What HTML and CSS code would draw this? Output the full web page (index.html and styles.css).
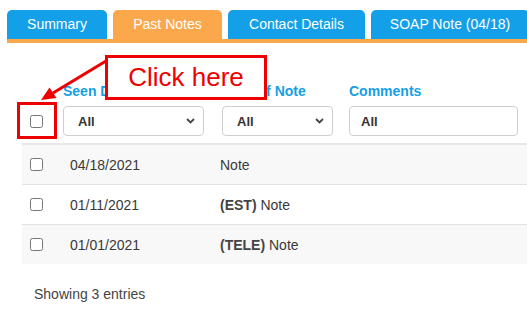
FILE: index.html
```html
<!DOCTYPE html>
<html>
<head>
<meta charset="utf-8">
<link rel="stylesheet" href="styles.css">
</head>
<body>
<div class="page">
  <div class="tabs">
    <div class="tab tab-summary">Summary</div>
    <div class="tab tab-past active">Past Notes</div>
    <div class="tab tab-contact">Contact Details</div>
    <div class="tab tab-soap">SOAP Note (04/18)</div>
  </div>

  <div class="content">
    <div class="filters">
      <div class="col col-check">
        <div class="label">&nbsp;</div>
        <div class="control"><input type="checkbox" class="cb"></div>
      </div>
      <div class="col col-date">
        <div class="label">Seen Date</div>
        <div class="select sel-date"><span>All</span>
          <svg width="9" height="6" viewBox="0 0 9 6"><path d="M1 1 L4.5 4.5 L8 1" fill="none" stroke="#444" stroke-width="1.8"/></svg>
        </div>
      </div>
      <div class="col col-type">
        <div class="label">Type of Note</div>
        <div class="select sel-type"><span>All</span>
          <svg width="9" height="6" viewBox="0 0 9 6"><path d="M1 1 L4.5 4.5 L8 1" fill="none" stroke="#444" stroke-width="1.8"/></svg>
        </div>
      </div>
      <div class="col col-comments">
        <div class="label">Comments</div>
        <div class="input">All</div>
      </div>
    </div>

    <div class="rows">
      <div class="row odd">
        <div class="c-check"><input type="checkbox" class="cb"></div>
        <div class="c-date">04/18/2021</div>
        <div class="c-note">Note</div>
      </div>
      <div class="row">
        <div class="c-check"><input type="checkbox" class="cb"></div>
        <div class="c-date">01/11/2021</div>
        <div class="c-note"><b>(EST)</b> Note</div>
      </div>
      <div class="row odd last">
        <div class="c-check"><input type="checkbox" class="cb"></div>
        <div class="c-date">01/01/2021</div>
        <div class="c-note"><b>(TELE)</b> Note</div>
      </div>
    </div>

    <div class="info">Showing 3 entries</div>
  </div>

  <div class="callout">Click here</div>
  <div class="highlight"></div>
  <svg class="arrow" width="527" height="336" viewBox="0 0 527 336">
    <line x1="106" y1="61" x2="53" y2="93" stroke="#ee0000" stroke-width="3"/>
    <polygon points="41,100 56.5,98 49.5,87.5" fill="#ee0000"/>
  </svg>
</div>
</body>
</html>
```

FILE: styles.css
```css
* { box-sizing: border-box; }
html, body {
  margin: 0;
  padding: 0;
  background: #fff;
}
body {
  font-family: "Liberation Sans", Arial, sans-serif;
  color: #333;
  width: 527px;
  height: 336px;
  overflow: hidden;
}
.page {
  position: relative;
  width: 527px;
  height: 336px;
}
.tabs {
  display: flex;
  gap: 6px;
  padding: 10px 0 0 7px;
  border-bottom: 4px solid #fba84d;
  overflow: hidden;
  margin-left: 7px;
  padding-left: 0;
}
.tab {
  flex: none;
  height: 29px;
  border-radius: 5px 5px 0 0;
  background: #14a0e9;
  color: #fff;
  font-size: 14px;
  line-height: 29px;
  text-align: center;
}
.tab.active { background: #fba84d; }
.tab-summary { width: 100px; }
.tab-past { width: 109px; }
.tab-contact { width: 137px; }
.tab-soap { width: 158px; }

.content {
  padding-left: 22px;
}
.filters {
  display: flex;
  padding-top: 40px;
  padding-bottom: 7px;
  border-bottom: 2px solid #e8e8e8;
}
.col { flex: none; }
.label {
  font-size: 14px;
  font-weight: bold;
  line-height: 16px;
  color: #149fe6;
  margin-bottom: 7px;
  white-space: nowrap;
}
.col-check { width: 41px; }
.col-check .control {
  height: 30px;
  display: flex;
  align-items: center;
  padding-left: 8px;
}
.col-date { width: 159px; }
.col-type { width: 127px; }
.col-comments { flex: 1; }
.select, .input {
  height: 30px;
  border: 1px solid #cfcfcf;
  border-radius: 4px;
  font-size: 13px;
  font-weight: bold;
  color: #333;
  display: flex;
  align-items: center;
  background: #fff;
}
.select {
  justify-content: space-between;
  padding: 0 8px 0 14px;
}
.sel-date { width: 141px; }
.sel-type { width: 111px; }
.input {
  width: 169px;
  padding-left: 11px;
}
.cb {
  margin: 0;
  width: 13px;
  height: 13px;
}

.row {
  display: grid;
  grid-template-columns: 48px 150px 1fr;
  align-items: center;
  height: 40px;
  border-bottom: 1px solid #e2e2e2;
  font-size: 14px;
  color: #3a3a3a;
}
.row.last {
  height: 39px;
  border-bottom: none;
}
.row.odd { background: #f8f8f8; }
.c-check {
  display: flex;
  align-items: center;
  padding-left: 8px;
}
.c-note b { color: #444; }

.info {
  margin-top: 22px;
  padding-left: 12px;
  font-size: 14px;
  line-height: 16px;
  color: #444;
}

.callout {
  position: absolute;
  left: 105px;
  top: 55px;
  width: 162px;
  height: 45px;
  border: 3px solid #ee0000;
  background: #fff;
  color: #ee0000;
  font-size: 26px;
  line-height: 39px;
  text-align: center;
}
.highlight {
  position: absolute;
  left: 17px;
  top: 102px;
  width: 40px;
  height: 37px;
  border: 3px solid #ee0000;
}
.arrow {
  position: absolute;
  left: 0;
  top: 0;
  pointer-events: none;
}
```
